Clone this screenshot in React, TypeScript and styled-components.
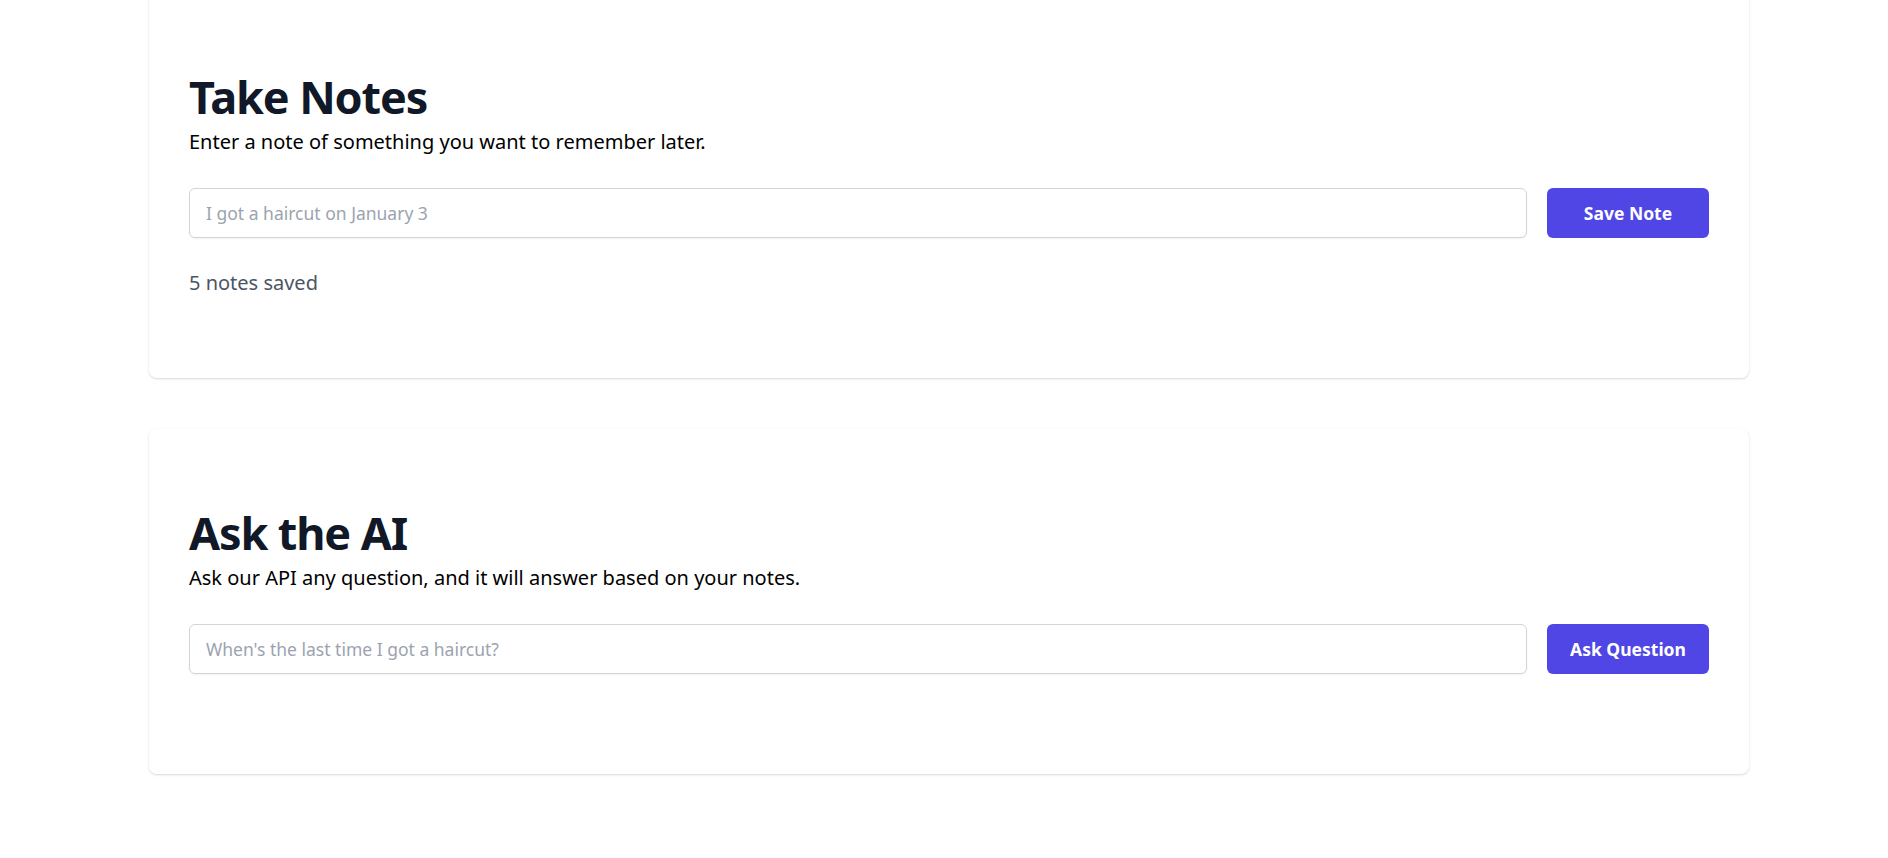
import React, { useState } from "react";
import styled, { createGlobalStyle } from "styled-components";

const GlobalStyle = createGlobalStyle`
  html, body {
    margin: 0;
    padding: 0;
    background: #ffffff;
    font-family: "Noto Sans", "Open Sans", sans-serif;
  }
  * {
    box-sizing: border-box;
  }
`;

export default function App() {
  const [note, setNote] = useState("");
  const [question, setQuestion] = useState("");
  const [notes] = useState(5);

  return (
    <Page>
      <GlobalStyle />
      <Column>
        <Card $bottom={81}>
          <Title>Take Notes</Title>
          <Lead>Enter a note of something you want to remember later.</Lead>
          <Form onSubmit={(e) => e.preventDefault()}>
            <Field
              value={note}
              onChange={(e) => setNote(e.target.value)}
              placeholder="I got a haircut on January 3"
            />
            <Button type="submit">Save Note</Button>
          </Form>
          <Count>{notes} notes saved</Count>
        </Card>

        <Card $bottom={100}>
          <Title>Ask the AI</Title>
          <Lead>Ask our API any question, and it will answer based on your notes.</Lead>
          <Form onSubmit={(e) => e.preventDefault()}>
            <Field
              value={question}
              onChange={(e) => setQuestion(e.target.value)}
              placeholder="When's the last time I got a haircut?"
            />
            <Button type="submit">Ask Question</Button>
          </Form>
        </Card>
      </Column>
    </Page>
  );
}

const Page = styled.main`
  display: flex;
  justify-content: center;
  padding: 0 0 80px 10px;
`;

const Column = styled.div`
  width: 100%;
  max-width: 1600px;
  display: flex;
  flex-direction: column;
  gap: 51px;
  margin-top: -7px;
`;

const Card = styled.section<{ $bottom: number }>`
  background: #ffffff;
  border-radius: 8px;
  box-shadow: 0 1px 3px rgba(0, 0, 0, 0.1), 0 1px 2px rgba(0, 0, 0, 0.06);
  padding: 77px 40px ${(p) => p.$bottom}px;
`;

const Title = styled.h2`
  margin: 0;
  font-size: 45px;
  line-height: 54px;
  font-weight: 700;
  letter-spacing: -0.025em;
  color: #111827;
`;

const Lead = styled.p`
  margin: 4px 0 32px;
  font-size: 20px;
  line-height: 28px;
  color: #000000;
`;

const Form = styled.form`
  display: flex;
  align-items: center;
  gap: 20px;
`;

const Field = styled.input`
  flex: 1;
  height: 50px;
  padding: 0 16px;
  border: 1px solid #d1d5db;
  border-radius: 6px;
  font-family: inherit;
  font-size: 17.5px;
  color: #111827;
  outline: none;
  box-shadow: 0 1px 2px rgba(0, 0, 0, 0.05);

  &::placeholder {
    color: #9ca3af;
  }
`;

const Button = styled.button`
  width: 162px;
  height: 50px;
  border: none;
  border-radius: 6px;
  background: #4f46e5;
  color: #ffffff;
  font-family: inherit;
  font-size: 17.5px;
  font-weight: 700;
  cursor: pointer;
`;

const Count = styled.p`
  margin: 31px 0 0;
  font-size: 20px;
  line-height: 28px;
  color: #4b5563;
`;
